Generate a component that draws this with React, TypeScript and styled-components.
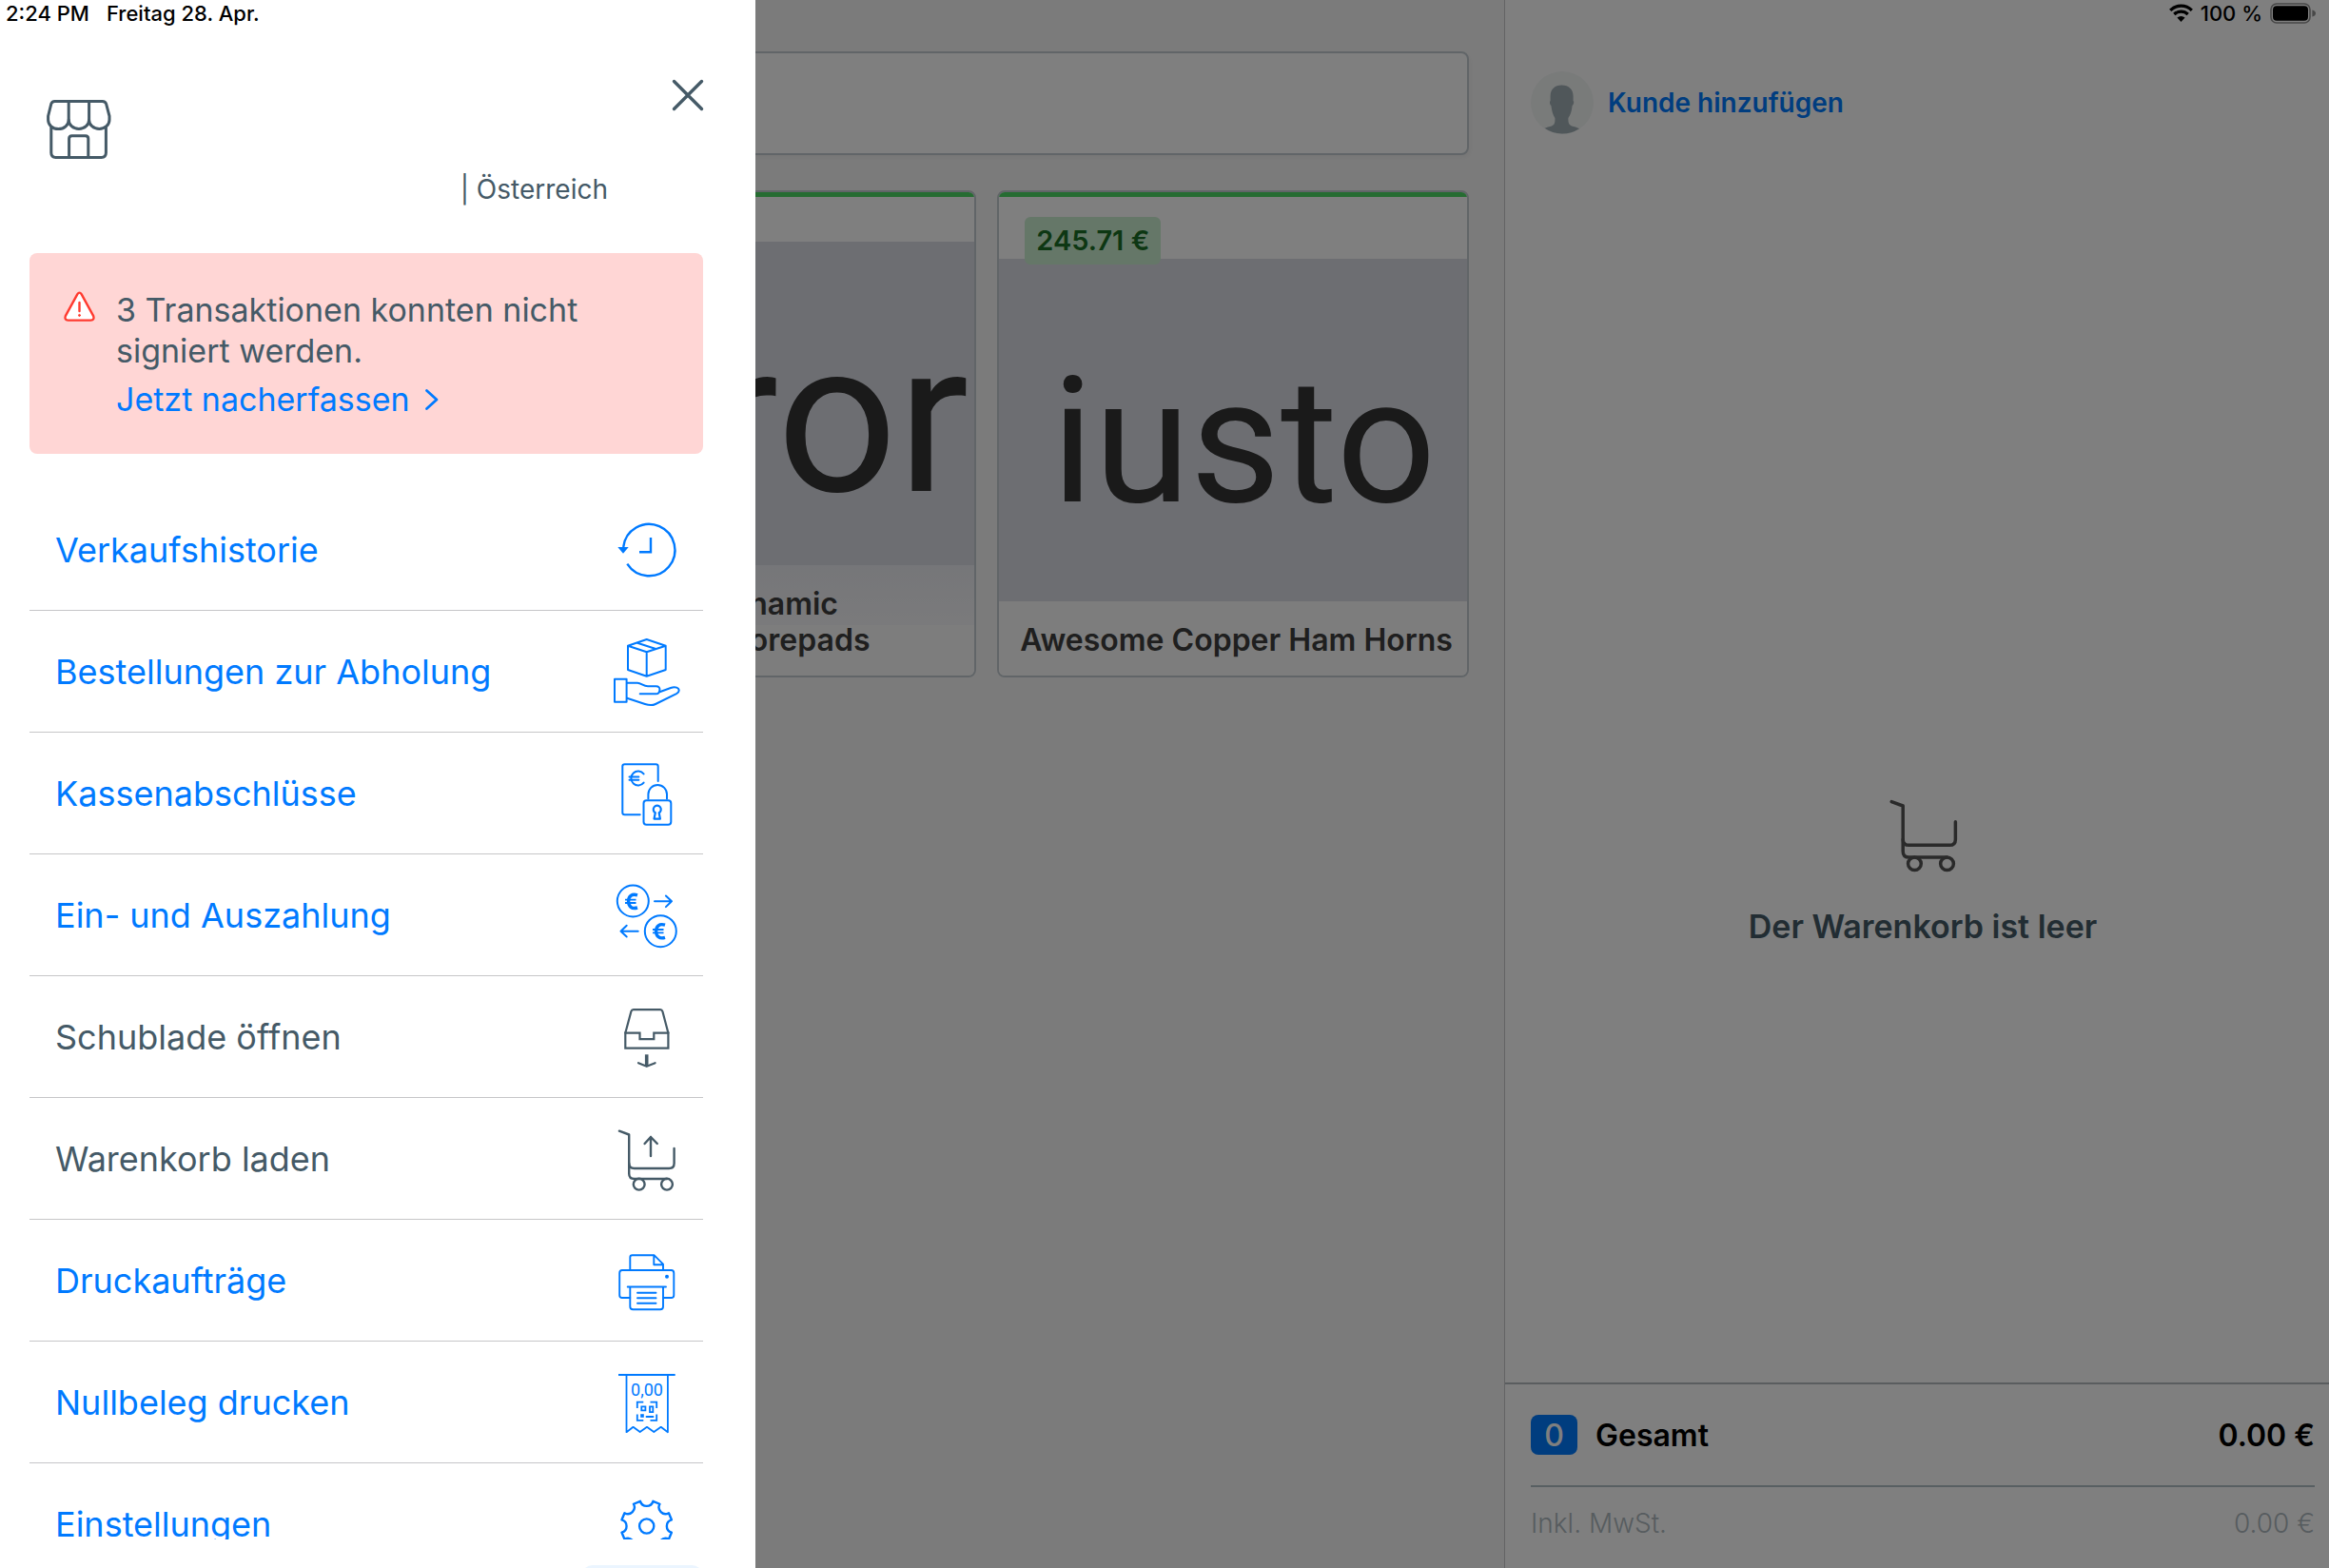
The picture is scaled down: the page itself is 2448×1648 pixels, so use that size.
import React from "react";
import styled, { createGlobalStyle } from "styled-components";

const blue = "#007aff";
const slate = "#455a67";

const GlobalStyle = createGlobalStyle`
  *, *::before, *::after { box-sizing: border-box; }
  body {
    margin: 0;
    background: #f7f7f7;
    font-family: Inter, "Liberation Sans", sans-serif;
    color: #000;
    overflow: hidden;
  }
  button, input { font: inherit; color: inherit; }
  button { padding: 0; border: 0; background: none; cursor: pointer; text-align: left; }
  h2, p, ul { margin: 0; padding: 0; }
  ul { list-style: none; }
  svg { display: block; flex: none; overflow: visible; }
`;

const Screen = styled.div`
  position: relative;
  display: grid;
  grid-template-columns: minmax(0, 1fr) 867px;
  height: 100vh;
  overflow: hidden;
`;

const Catalog = styled.main`
  display: flex;
  flex-direction: column;
  gap: 37px;
  padding: 54px 37px 0 13px;
`;

const Search = styled.input`
  width: 100%;
  height: 109px;
  padding: 0 32px;
  border: 2px solid #c3cbd0;
  border-radius: 8px;
  background: #fff;
  font-size: 32px;
  box-shadow: 2px 3px 4px rgba(0, 0, 0, 0.04);
`;

const Products = styled.div`
  display: grid;
  grid-template-columns: repeat(3, minmax(0, 1fr));
  gap: 22px;
`;

const Card = styled.article`
  position: relative;
  display: flex;
  flex-direction: column;
  height: 512px;
  border: 2px solid #c3cbd0;
  border-radius: 8px;
  overflow: hidden;
  background: #fff;
  &::before {
    content: "";
    flex: none;
    height: 5px;
    background: #4cd964;
  }
`;

const Price = styled.span`
  position: absolute;
  top: 26px;
  left: 27px;
  padding: 0 12px;
  border-radius: 6px;
  background: #cbeed1;
  color: #1b6e26;
  font-size: 29px;
  font-weight: 600;
  line-height: 50px;
`;

const Picture = styled.div<{ $top: number; $size: number; $drop: number; $indent: number }>`
  flex: 1;
  display: flex;
  align-items: center;
  justify-content: center;
  margin-top: ${(p) => p.$top}px;
  padding: ${(p) => p.$drop}px 0 0 ${(p) => p.$indent}px;
  background: #dadce4;
  color: #343434;
  font-family: Roboto, "Liberation Sans", sans-serif;
  font-size: ${(p) => p.$size}px;
  line-height: 1;
`;

const Caption = styled.p<{ $tinted?: boolean }>`
  padding: 22px 0 18px 22px;
  background: ${(p) => (p.$tinted ? "linear-gradient(#ecedf2 0, #f5f5f8 63px, #fafafa 63px)" : "#fbfbfb")};
  color: #3e3e3e;
  font-size: 32px;
  font-weight: 600;
  line-height: 38px;
  white-space: pre;
`;

const Cart = styled.aside`
  display: flex;
  flex-direction: column;
  border-left: 1px solid #c6c6c8;
  background: #fff;
`;

const Customer = styled.button`
  display: flex;
  align-items: center;
  gap: 15px;
  margin: 75px 27px 0;
  color: ${blue};
  font-size: 28px;
  font-weight: 600;
`;

const EmptyCart = styled.div`
  flex: 1;
  display: flex;
  flex-direction: column;
  align-items: center;
  justify-content: center;
  gap: 34px;
  padding: 242px 15px 0 27px;
  color: ${slate};
  font-size: 34px;
  font-weight: 600;
  line-height: 44px;
`;

const Totals = styled.footer`
  padding: 0 15px 0 27px;
  border-top: 2px solid #b4babf;
`;

const TotalRow = styled.div`
  display: flex;
  align-items: center;
  gap: 19px;
  height: 108px;
  border-bottom: 2px solid #b0bec5;
  font-size: 32px;
  font-weight: 600;
`;

const Count = styled.span`
  display: grid;
  place-items: center;
  width: 49px;
  height: 42px;
  border-radius: 8px;
  background: ${blue};
  color: #fff;
  font-weight: 500;
`;

const TaxRow = styled(TotalRow)`
  height: 85px;
  padding-bottom: 10px;
  border: 0;
  color: #aeb9bf;
  font-size: 28px;
  font-weight: 300;
`;

const Amount = styled.span`
  margin-left: auto;
`;

const Backdrop = styled.div`
  position: absolute;
  inset: 0;
  background: rgba(0, 0, 0, 0.5);
`;

const Drawer = styled.section`
  position: absolute;
  top: 0;
  bottom: 0;
  left: 0;
  display: flex;
  flex-direction: column;
  width: 794px;
  padding: 84px 55px 0 31px;
  background: #fff;
  color: ${slate};
`;

const DrawerHead = styled.header`
  display: flex;
  align-items: flex-start;
  justify-content: space-between;
  height: 97px;
  padding: 21px 0 0 18px;
`;

const Close = styled.button`
  margin-top: -21px;
`;

const Location = styled.p`
  height: 85px;
  padding-right: 100px;
  font-size: 28px;
  line-height: 36px;
  text-align: right;
`;

const Alert = styled.div`
  display: flex;
  gap: 22px;
  flex: none;
  height: 211px;
  padding: 38px 36px;
  border-radius: 8px;
  background: #ffd6d5;
  font-size: 34px;
  line-height: 43px;
`;

const AlertLink = styled.a`
  display: flex;
  align-items: center;
  gap: 16px;
  margin-top: 8px;
  color: ${blue};
  text-decoration: none;
`;

const Menu = styled.nav`
  flex: 1;
  min-height: 0;
  margin-top: 37px;
  overflow: hidden;
`;

const MenuItem = styled.li`
  height: 128px;
  border-bottom: 1px solid #c6c6c8;
`;

const MenuButton = styled.button<{ $muted?: boolean }>`
  display: flex;
  align-items: center;
  justify-content: space-between;
  width: 100%;
  height: 100%;
  padding: 0 23px 0 27px;
  color: ${(p) => (p.$muted ? slate : blue)};
  font-size: 36px;
`;

const DrawerFoot = styled.div`
  display: flex;
  justify-content: flex-end;
  height: 30px;
  padding-top: 27px;
  overflow: hidden;
`;

const FootButton = styled.button`
  flex: none;
  width: 128px;
  height: 56px;
  border-radius: 12px;
  background: #ebf5ff;
`;

const StatusBar = styled.div`
  position: absolute;
  top: 0;
  left: 0;
  right: 0;
  display: flex;
  align-items: center;
  gap: 8px;
  height: 27px;
  padding: 0 14px 0 6px;
  font-size: 22px;
  font-weight: 500;
`;

const StatusDate = styled.span`
  margin: 0 auto 0 10px;
`;

const Icon = ({ children, w = 2 }: { children: React.ReactNode; w?: number }) => (
  <svg width="72" height="72" viewBox="0 0 72 72" fill="none" stroke="currentColor"
    strokeWidth={w} strokeLinecap="round" strokeLinejoin="round" aria-hidden="true">
    {children}
  </svg>
);

const HistoryIcon = () => (
  <Icon w={2.4}>
    <path d="M11.2 33A27.2 27.2 0 1 1 15.3 50.7" strokeLinecap="butt" />
    <path d="M5.3 33h11.4L11 39.7z" fill="currentColor" stroke="none" />
    <path d="M40 23v15.3H28" strokeLinecap="butt" strokeLinejoin="miter" />
  </Icon>
);

const PickupIcon = () => (
  <Icon w={2}>
    <path d="M35.7 2L55.7 8.7V34L35.7 40.7L16 34V8.7zM16 8.7L35.7 15.3L55.7 8.7M35.7 15.3V40.7M26 5.7L45.3 12" />
    <path d="M2 43.7h12.6v24H2z" />
    <path d="M15 47.7H26C30 47.7 32 51.3 37 51.3H45.5C48.5 51.3 49.6 53 49.4 55C49.2 58 48 59.3 45.5 59.3H28.7" />
    <path d="M49.4 57.2L61 53C66 51.2 69.6 53 69.7 55.7C69.7 57.4 68.6 58.2 67 59.1L45 70C41 72 38 71.3 34 70L15 63.7" />
  </Icon>
);

const ClosingIcon = () => (
  <Icon>
    <path d="M47.7 23V7.6Q47.7 5.3 45.4 5.3H12.6Q10.3 5.3 10.3 7.6V56Q10.3 58.3 12.6 58.3H28.7" />
    <rect x="32.5" y="43.2" width="28.8" height="25.6" rx="3" />
    <path d="M37.4 41.5V36.8a9.8 9.8 0 0 1 19.6 0V41.5" />
    <path d="M44.8 56.2a4 4 0 1 1 3.9 0L49.9 62.6h-6.4z" strokeWidth="2.2" />
    <path d="M32.6 15.4A7.4 7.4 0 1 0 32.6 24.6M17.5 18.6H27.4M17.5 21.8H27.4" />
  </Icon>
);

const TransferIcon = () => (
  <Icon w={2}>
    <circle cx="21.3" cy="21" r="16.5" />
    <circle cx="50.3" cy="52.7" r="16.5" />
    <path d="M44 21.3H62M55.9 15.5L62 21.3L55.9 27.1M26.7 52.7H8.5M14.7 46.7L8.5 52.7L14.7 58.5" />
    <path d="M26 14.8C20 13 16.6 16 16.6 21.3C16.6 26.6 20 29.8 26 28" strokeWidth="3.4" strokeLinecap="butt" />
    <path d="M13 19.7H24.5M13 23H24.5" strokeWidth="1.8" strokeLinecap="butt" />
    <path d="M55 46.2C49 44.4 45.6 47.4 45.6 52.7C45.6 58 49 61.2 55 59.4" strokeWidth="3.4" strokeLinecap="butt" />
    <path d="M42 51H53.5M42 54.3H53.5" strokeWidth="1.8" strokeLinecap="butt" />
  </Icon>
);

const TrayIcon = () => (
  <Icon w={2.2}>
    <path d="M13.3 31.7L19.4 9Q20 7.2 21.8 7.2H50Q51.8 7.2 52.4 9L58.4 31.7" />
    <path d="M13.3 31.7H28.5V38.2H43.3V31.7H58.4V47.7H13.3z" strokeLinejoin="miter" />
    <path d="M35.7 54.3V66" strokeWidth="3.6" strokeLinecap="butt" />
    <path d="M27 63.2L35.7 66.8L44.6 63.2" />
  </Icon>
);

const CartShape = () => (
  <>
    <path d="M6.9 6.7L17.2 10.5V51.5Q17.2 57 22.7 57H57" />
    <path d="M17.2 40.7Q17.2 46 22.7 46H59.2Q64.6 46 64.6 40.7V25" />
    <circle cx="27.7" cy="62.7" r="5.9" />
    <circle cx="57" cy="62.7" r="5.9" />
  </>
);

const LoadCartIcon = () => (
  <Icon w={2.4}>
    <CartShape />
    <path d="M40 33V13M33.6 20L40 13L46.8 20" />
  </Icon>
);

const PrinterIcon = () => (
  <Icon w={1.9}>
    <path d="M18.3 54H10Q7.2 54 7.2 51.2V28Q7.2 25 10 25H61.5Q64.3 25 64.3 28V51.2Q64.3 54 61.5 54H53" />
    <path d="M18.3 25V11.5Q18.3 9.3 20.6 9.3H43.7L53 18.7V25M43.3 9.3V19.3H53" />
    <path d="M18.3 42.5V63.3Q18.3 66.3 21.3 66.3H50Q53 66.3 53 63.3V42.5M15.7 42.5H56" />
    <path d="M26 48.7H45.5M26 54.3H45.5M26 59.7H45.5" />
    <circle cx="57" cy="31.7" r="2" fill="currentColor" stroke="none" />
  </Icon>
);

const ReceiptIcon = () => (
  <Icon w={1.8}>
    <path d="M6 7H65.7" strokeWidth="2" strokeLinecap="butt" />
    <path d="M14.5 7V67.2L21.5 61.8L28.7 67L36 61.8L43.3 67L50.7 61.8L57.9 67.2V7" />
    <text x="36" y="28.6" textAnchor="middle" fontSize="18" fontWeight="400" fill="currentColor" stroke="none"
      fontFamily="Roboto, sans-serif">0,00</text>
    <path d="M25.8 42V35.7H32.3M39.5 35.7H46.2V42M46.2 48.5V54.8H39.5M32.3 54.8H25.8V48.5"
      strokeLinecap="butt" strokeLinejoin="miter" />
    <path d="M30.3 40.3H34.4V44.3H30.3zM39 40.3H42.3V46.2H39zM35.5 51H42.5" strokeLinejoin="miter" />
    <path d="M29.2 48.2h3.6v3.6h-3.6z" fill="currentColor" stroke="none" />
  </Icon>
);

const gearPath = (() => {
  const point = (deg: number) => {
    const a = ((deg - 90) * Math.PI) / 180;
    return `${(35.7 + 27 * Math.cos(a)).toFixed(2)} ${(38 + 27 * Math.sin(a)).toFixed(2)}`;
  };
  let d = `M${point(-14.4)}`;
  for (let i = 0; i < 8; i += 1) {
    d += `A7 7 0 0 0 ${point(i * 45 + 14.4)}L${point(i * 45 + 30.6)}`;
  }
  return `${d}Z`;
})();

const GearIcon = () => (
  <Icon w={2.4}>
    <path d={gearPath} />
    <circle cx="35.7" cy="38" r="7.6" />
  </Icon>
);

const StoreIcon = () => (
  <svg width="68" height="62" viewBox="0 0 68 62" fill="none" stroke="currentColor" strokeWidth="3"
    strokeLinecap="round" strokeLinejoin="round" aria-hidden="true">
    <path d="M8.5 1.4H58.5Q61.8 1.4 62.6 4.2L66 17V21A10.7 9.5 0 0 1 44.6 21A10.7 9.5 0 0 1 23.2 21A10.7 9.5 0 0 1 1.6 21V17L4.8 4.2Q5.6 1.4 8.5 1.4z" />
    <path d="M23.2 1.4V21M44.6 1.4V21" />
    <path d="M4.8 29V55.5Q4.8 60.4 9.6 60.4H57.6Q62.4 60.4 62.4 55.5V29" />
    <path d="M23.6 60.4V40.8Q23.6 37.8 26.6 37.8H40.8Q43.8 37.8 43.8 40.8V60.4" />
  </svg>
);

const CloseIcon = () => (
  <svg width="32" height="32" viewBox="0 0 32 32" stroke={slate} strokeWidth="3.4" strokeLinecap="round" aria-hidden="true">
    <path d="M1.5 1.5L30.5 30.5M30.5 1.5L1.5 30.5" />
  </svg>
);

const WarningIcon = () => (
  <svg width="33" height="54" viewBox="0 -1 33 54" fill="none" stroke="#ff3b30" strokeWidth="2.4"
    strokeLinecap="round" strokeLinejoin="round" aria-hidden="true">
    <path d="M14.4 4.2Q16.5 1 18.6 4.2L31.2 27.2Q32.6 31.4 28.4 31.6H4.6Q.4 31.4 1.8 27.2z" fill="#fff" />
    <path d="M16.5 13V22" />
    <circle cx="16.5" cy="26.4" r="1" fill="#ff3b30" strokeWidth="1" />
  </svg>
);

const ChevronIcon = () => (
  <svg width="14" height="22" viewBox="0 0 14 22" fill="none" stroke="currentColor" strokeWidth="2.8"
    strokeLinecap="round" strokeLinejoin="round" aria-hidden="true">
    <path d="M1.5 1.5L12 11L1.5 20.5" />
  </svg>
);

const AvatarIcon = () => (
  <svg width="66" height="66" viewBox="0 0 66 66" aria-hidden="true">
    <circle cx="33" cy="33" r="33" fill="#f2f6f5" />
    <path d="M32.5 14.5C25 14.5 20.6 19 20.6 26V31C19.6 31.5 19.8 35 21.4 36C22.2 42 23.4 46 25.4 49C25.6 54 25 56 22 57.4Q18 58.2 14.6 59.8A33 33 0 0 0 51 60.2Q47 58.2 43 57.4C40 56 39.2 54 39.4 49C41.6 46 43 42 43.6 36C45.4 35 45.6 31.5 44.6 31V26C44.6 19 40 14.5 32.5 14.5z" fill="#a0aeb4" />
  </svg>
);

const EmptyCartIcon = () => (
  <svg width="71" height="78" viewBox="5 5 61 66" fill="none" stroke="#555" strokeWidth="3"
    strokeLinecap="round" strokeLinejoin="round" aria-hidden="true">
    <CartShape />
  </svg>
);

const WifiIcon = () => (
  <svg width="25" height="19" viewBox="0 0 25 19" fill="none" stroke="#000" strokeWidth="3.2" aria-hidden="true">
    <path d="M1.2 6.8A16 16 0 0 1 23.8 6.8M5.3 11A10.4 10.4 0 0 1 19.7 11" />
    <path d="M12.5 19L8.4 14.6A6 6 0 0 1 16.6 14.6z" fill="#000" stroke="none" />
  </svg>
);

const BatteryIcon = () => (
  <svg width="48" height="22" viewBox="0 0 48 22" aria-hidden="true">
    <rect x="1" y="1" width="41" height="20" rx="6" fill="none" stroke="#484848" strokeWidth="1.6" />
    <rect x="3" y="3.2" width="37" height="15.6" rx="4" fill="#000" />
    <path d="M44.4 7.5Q48 8.5 48 11Q48 13.5 44.4 14.5z" fill="#484848" />
  </svg>
);

const menu = [
  { label: "Verkaufshistorie", icon: HistoryIcon },
  { label: "Bestellungen zur Abholung", icon: PickupIcon },
  { label: "Kassenabschlüsse", icon: ClosingIcon },
  { label: "Ein- und Auszahlung", icon: TransferIcon },
  { label: "Schublade öffnen", icon: TrayIcon, muted: true },
  { label: "Warenkorb laden", icon: LoadCartIcon, muted: true },
  { label: "Druckaufträge", icon: PrinterIcon },
  { label: "Nullbeleg drucken", icon: ReceiptIcon },
  { label: "Einstellungen", icon: GearIcon },
];

export default function App() {
  return (
    <>
      <GlobalStyle />
      <Screen>
        <Catalog>
          <Search type="search" aria-label="Artikel suchen" />
          <Products>
            <Card />
            <Card>
              <Picture $top={47} $size={222} $drop={32} $indent={12}>error</Picture>
              <Caption $tinted>{"Lightweight Dynamic\nHeavy-Duty Scorepads"}</Caption>
            </Card>
            <Card>
              <Price>245.71 €</Price>
              <Picture $top={65} $size={184} $drop={24} $indent={22}>iusto</Picture>
              <Caption>Awesome Copper Ham Horns</Caption>
            </Card>
          </Products>
        </Catalog>

        <Cart>
          <Customer type="button">
            <AvatarIcon />
            Kunde hinzufügen
          </Customer>
          <EmptyCart>
            <EmptyCartIcon />
            <p>Der Warenkorb ist leer</p>
          </EmptyCart>
          <Totals>
            <TotalRow>
              <Count>0</Count>
              <span>Gesamt</span>
              <Amount>0.00 €</Amount>
            </TotalRow>
            <TaxRow>
              <span>Inkl. MwSt.</span>
              <Amount>0.00 €</Amount>
            </TaxRow>
          </Totals>
        </Cart>

        <Backdrop />

        <Drawer aria-label="Menü">
          <DrawerHead>
            <StoreIcon />
            <Close type="button" aria-label="Schließen">
              <CloseIcon />
            </Close>
          </DrawerHead>
          <Location>| Österreich</Location>
          <Alert role="alert">
            <WarningIcon />
            <div>
              <p>3 Transaktionen konnten nicht signiert werden.</p>
              <AlertLink href="#nacherfassen">
                Jetzt nacherfassen
                <ChevronIcon />
              </AlertLink>
            </div>
          </Alert>
          <Menu>
            <ul>
              {menu.map(({ label, icon: Glyph, muted }) => (
                <MenuItem key={label}>
                  <MenuButton type="button" $muted={muted}>
                    {label}
                    <Glyph />
                  </MenuButton>
                </MenuItem>
              ))}
            </ul>
          </Menu>
          <DrawerFoot>
            <FootButton type="button" aria-label="Hilfe" />
          </DrawerFoot>
        </Drawer>

        <StatusBar>
          <span>2:24 PM</span>
          <StatusDate>Freitag 28. Apr.</StatusDate>
          <WifiIcon />
          <span>100 %</span>
          <BatteryIcon />
        </StatusBar>
      </Screen>
    </>
  );
}
